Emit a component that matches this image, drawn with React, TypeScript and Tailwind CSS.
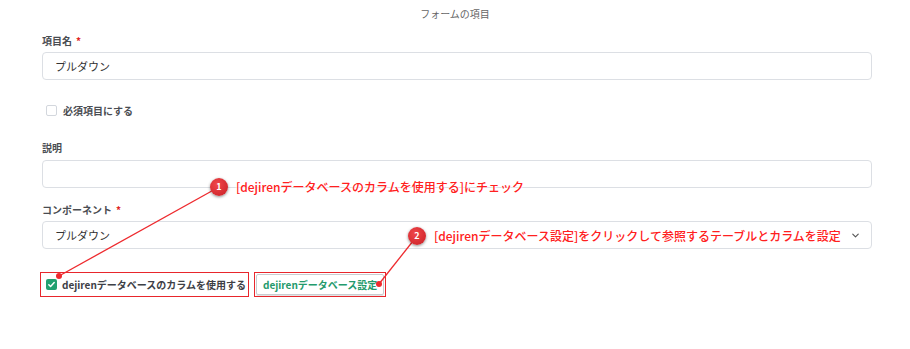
import { ChevronDown } from "lucide-react";

const font = { fontFamily: '"Noto Sans CJK JP", "Noto Sans", sans-serif' };

function Label({ text, required, className }: { text: string; required?: boolean; className: string }) {
  return (
    <div className={`h-[16px] flex items-center text-[10px] font-bold text-[#4a4d52] leading-[16px] ${className}`}>
      {text}
      {required && <span className="ml-[4px] text-[#e02424]">*</span>}
    </div>
  );
}

function Field({ value, select }: { value?: string; select?: boolean }) {
  return (
    <div className="h-[28px] flex items-center justify-between rounded-[4px] border border-[#dcdfe4] bg-white pl-[12px] pr-[10px] text-[11px] text-[#333]">
      <span>{value}</span>
      {select && <ChevronDown size={11} strokeWidth={2.5} className="text-[#555]" />}
    </div>
  );
}

function Callout({ n, text, x, y }: { n: number; text: string; x: number; y: number }) {
  // annotation marker laid over the form
  return (
    <div className="absolute flex items-center" style={{ left: x - 9, top: y - 9 }}>
      <div className="w-[18px] h-[18px] rounded-full bg-[radial-gradient(circle_at_40%_35%,#f0474b,#c81e24)] shadow-[0_1px_3px_rgba(0,0,0,0.45)] flex items-center justify-center text-[9px] font-bold text-white">
        {n}
      </div>
      <span className="ml-[8px] whitespace-nowrap text-[12px] font-medium leading-[18px] text-[#ff2020] [text-shadow:0_0_2px_#fff,0_0_2px_#fff,0_0_3px_#fff]">
        {text}
      </span>
    </div>
  );
}

export default function App() {
  return (
    <div className="relative w-[910px] h-[349px] bg-white overflow-hidden" style={font}>
      <div className="h-[26px] flex items-center justify-center text-[10px] text-[#666]">フォームの項目</div>
      <div className="pl-[42px] w-[872px]">
        <Label text="項目名" required className="mt-[7px] mb-[3px]" />
        <Field value="プルダウン" />

        <div className="mt-[22px] h-[16px] flex items-center pl-[4px]">
          <span className="w-[11px] h-[11px] rounded-[2px] border border-[#d3d7dd] bg-white" />
          <span className="ml-[6px] text-[10px] font-bold text-[#4a4d52]">必須項目にする</span>
        </div>

        <Label text="説明" className="mt-[22px] mb-[4px]" />
        <Field />

        <Label text="コンポーネント" required className="mt-[14px] mb-[3px]" />
        <Field value="プルダウン" select />

        <div className="mt-[23px] flex items-center -ml-[2px]">
          <div className="h-[25px] flex items-center border-[1.5px] border-[#e8262c] pl-[5px] pr-[2px]">
            <span className="w-[11px] h-[11px] rounded-[2px] bg-[#22a070] flex items-center justify-center">
              <svg width="9" height="9" viewBox="0 0 10 10" fill="none">
                <path d="M2 5.2l2 2 4-4.4" stroke="#fff" strokeWidth="1.6" strokeLinecap="round" strokeLinejoin="round" />
              </svg>
            </span>
            <span className="ml-[5px] text-[10px] font-bold text-[#3d4046] whitespace-nowrap">dejirenデータベースのカラムを使用する</span>
          </div>
          <div className="ml-[5px] h-[25px] border-[1.5px] border-[#e8262c] p-px">
            <div className="h-full flex items-center rounded-[2px] border border-[#c9ccd0] px-[6px] shadow-[0_1px_1px_rgba(0,0,0,0.12)] text-[10px] font-bold text-[#249a6c] whitespace-nowrap">
              dejirenデータベース設定
            </div>
          </div>
        </div>
      </div>

      <svg className="absolute inset-0 pointer-events-none" width="910" height="349">
        <line x1="219" y1="187" x2="59" y2="276" stroke="#ee2a2e" strokeWidth="1.3" />
        <line x1="417" y1="236" x2="379" y2="284" stroke="#ee2a2e" strokeWidth="1.3" />
        <circle cx="59" cy="276" r="3" fill="#ee2a2e" />
        <circle cx="379" cy="284" r="3" fill="#ee2a2e" />
      </svg>
      <Callout n={1} x={219} y={187} text="[dejirenデータベースのカラムを使用する]にチェック" />
      <Callout n={2} x={417} y={236} text="[dejirenデータベース設定]をクリックして参照するテーブルとカラムを設定" />
    </div>
  );
}
